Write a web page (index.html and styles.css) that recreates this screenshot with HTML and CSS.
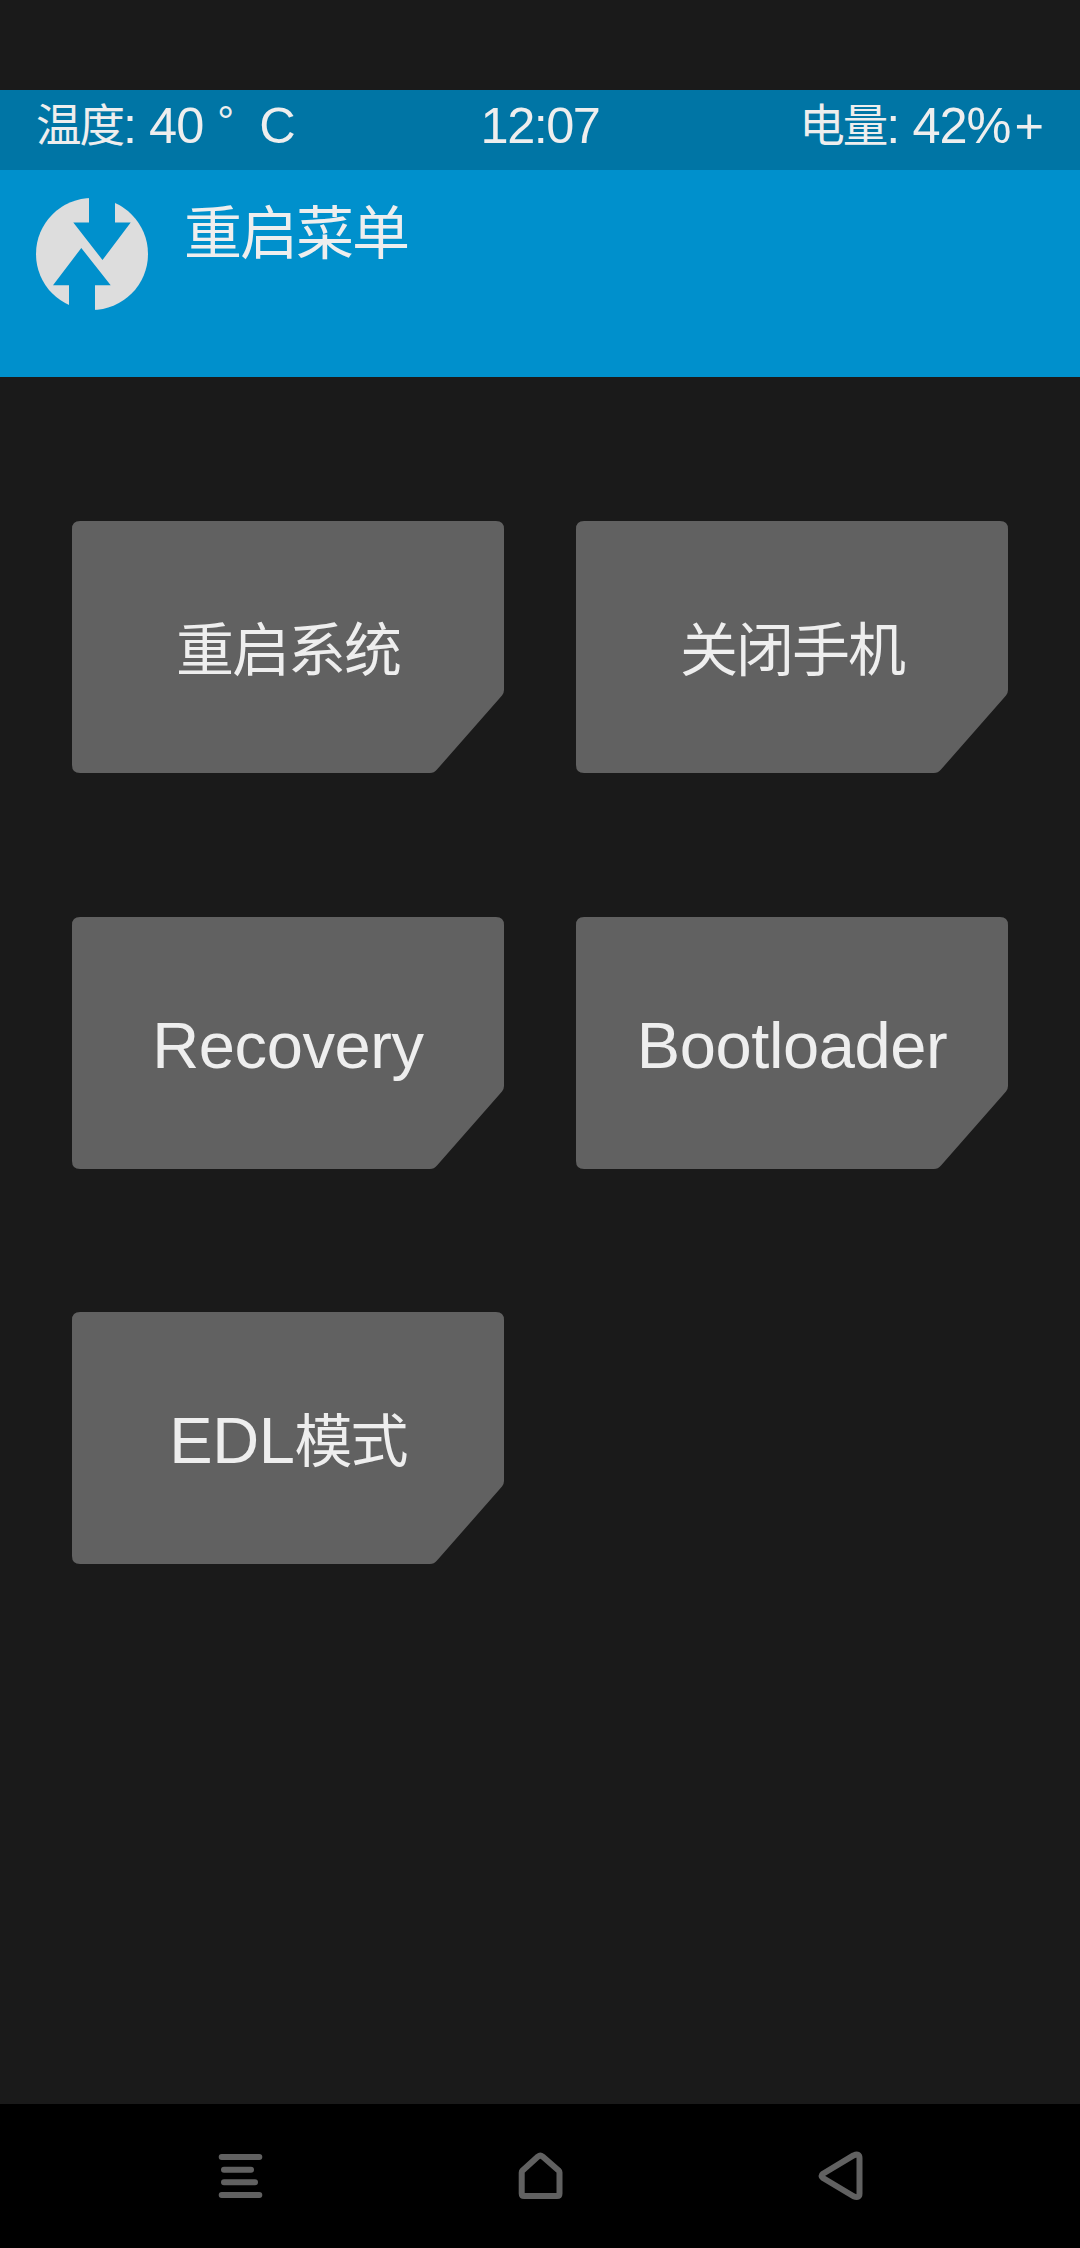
FILE: index.html
```html
<!DOCTYPE html>
<html lang="zh-CN">
<head>
<meta charset="utf-8">
<title>重启菜单</title>
<link rel="stylesheet" href="styles.css">
</head>
<body>
<div class="screen">
  <div class="status">
    <div class="status-item"><span class="cjk">温度</span>: 40<span class="degree">°</span>C</div>
    <div class="status-item clock">12:07</div>
    <div class="status-item battery"><span class="cjk">电量</span>: 42%<span class="charging">+</span></div>
  </div>
  <header class="header">
    <svg class="logo" viewBox="0 0 112 112">
      <circle cx="56" cy="56" r="56" fill="#dddddd"/>
      <path d="M53 -1V24.5H37.3L66.5 62L94.7 24.5H79V-1ZM33 113V87.3H17L45.3 50L74.7 87.3H59V113Z" fill="#0090cc"/>
    </svg>
    <h1 class="title">重启菜单</h1>
  </header>
  <main class="menu">
    <button class="card"><svg class="shape" viewBox="0 0 432 252"><use href="#card"/></svg><span class="label"><span class="cjk">重启系统</span></span></button>
    <button class="card"><svg class="shape" viewBox="0 0 432 252"><use href="#card"/></svg><span class="label"><span class="cjk">关闭手机</span></span></button>
    <button class="card"><svg class="shape" viewBox="0 0 432 252"><use href="#card"/></svg><span class="label">Recovery</span></button>
    <button class="card"><svg class="shape" viewBox="0 0 432 252"><use href="#card"/></svg><span class="label">Bootloader</span></button>
    <button class="card"><svg class="shape" viewBox="0 0 432 252"><use href="#card"/></svg><span class="label">EDL<span class="cjk">模式</span></span></button>
  </main>
  <nav class="nav">
    <svg class="nav-icon" viewBox="0 0 60 60"><path d="M11.7 11H49.3M14 23.7H41M14 36.3H45M11.7 49H49.3"/></svg>
    <svg class="nav-icon" viewBox="0 0 60 60"><path d="M11.7 26.500Q11.7 25.300 12.6 24.400L28 10.6Q30.3 8.8 32.6 10.6L48.6 24.400Q49.5 25.300 49.5 26.500V47.5Q49.5 50 47 50H14.2Q11.7 50 11.7 47.5Z"/></svg>
    <svg class="nav-icon" viewBox="0 0 60 60"><path d="M13 27.7L43.5 9.4Q49.5 6.8 49.5 12V47.6Q49.5 52.8 43.5 50.3L13 32Q10 29.9 13 27.7Z"/></svg>
  </nav>
</div>
<svg class="defs" width="0" height="0">
  <symbol id="card" viewBox="0 0 432 252">
    <path d="M8 0H424Q432 0 432 8V169Q432 172 430 174.500L365 248.500Q362 252 358 252H8Q0 252 0 244V8Q0 0 8 0Z" fill="#616161"/>
  </symbol>
</svg>
</body>
</html>
```

FILE: styles.css
```css
* { box-sizing: border-box; }

body {
  margin: 0;
  background: #1a1a1a;
  color: #eeeeee;
  font-family: "Liberation Sans", "Noto Sans CJK SC", sans-serif;
}

.screen {
  display: flex;
  flex-direction: column;
  width: 1080px;
  height: 2248px;
  padding-top: 90px;
  overflow: hidden;
}

.cjk {
  font-family: "Noto Sans CJK SC", sans-serif;
  font-weight: 400;
  line-height: 1;
}

.status {
  display: grid;
  grid-template-columns: 1fr auto 1fr;
  height: 80px;
  padding: 0 36px;
  background: #0075a5;
  font-size: 50.500px;
  line-height: 72px;
  letter-spacing: -1px;
  white-space: pre;
}
.status .cjk { font-size: 45.500px; letter-spacing: -2px; vertical-align: 1px; }
.clock { letter-spacing: -1.500px; }
.battery { padding-right: 1px; text-align: right; }
.charging { margin-left: 4px; }
.degree {
  display: inline-block;
  width: 56px;
  padding-left: 14px;
  font-size: 42px;
  line-height: 1;
  vertical-align: 7px;
}

.header {
  display: flex;
  gap: 36px;
  height: 207px;
  padding: 28px 36px;
  background: #0090cc;
}
.logo { width: 112px; height: 112px; }
.title {
  margin: 0;
  font: 400 58px/62px "Noto Sans CJK SC", sans-serif;
  letter-spacing: -2px;
}

.menu {
  flex: 1;
  display: grid;
  grid-template-columns: 432px 432px;
  grid-auto-rows: 252px;
  align-content: start;
  gap: 143.500px 72px;
  padding: 144px 72px 0;
}
.card {
  display: grid;
  padding: 0;
  border: 0;
  background: none;
  color: inherit;
  font: inherit;
}
.shape, .label { grid-area: 1 / 1; }
.shape { width: 432px; height: 252px; }
.label {
  padding-top: 5px;
  font-size: 65px;
  line-height: 247px;
  letter-spacing: -0.400px;
  text-align: center;
}
.label .cjk { font-size: 58px; letter-spacing: -2px; vertical-align: 1px; }

.nav {
  display: grid;
  grid-template-columns: repeat(3, 300px);
  place-content: center;
  place-items: center;
  height: 144px;
  background: #000;
}
.nav-icon {
  width: 60px;
  height: 60px;
  fill: none;
  stroke: #616161;
  stroke-width: 6;
  stroke-linecap: round;
  stroke-linejoin: round;
}
.defs { display: none; }
```
